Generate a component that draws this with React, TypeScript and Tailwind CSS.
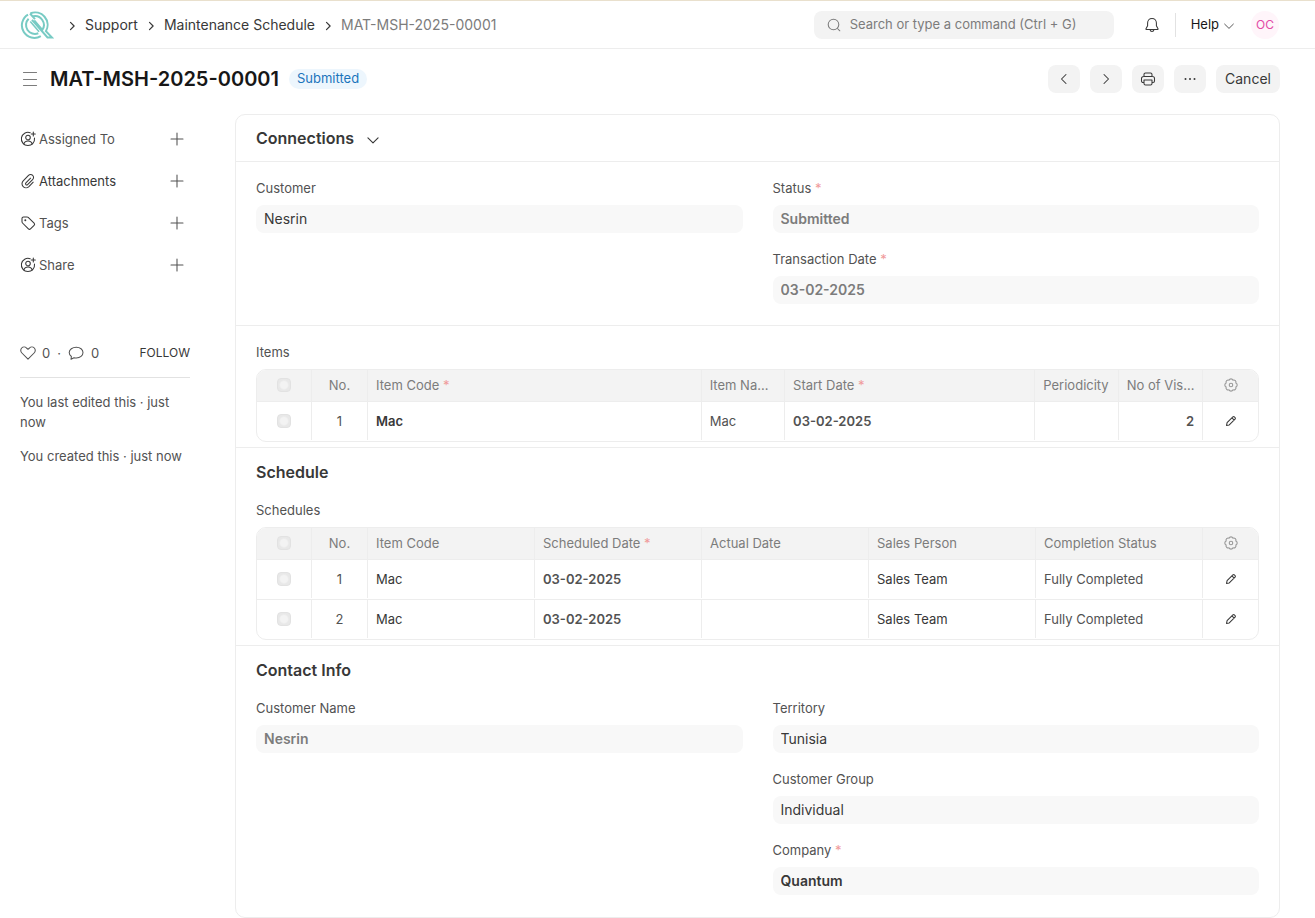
import type { ReactNode } from 'react';

type IconProps = { className?: string; children: ReactNode };

function Icon({ className = 'size-4', children }: IconProps) {
  return (
    <svg
      viewBox="0 0 16 16"
      fill="none"
      stroke="currentColor"
      strokeWidth="1.05"
      strokeLinecap="round"
      strokeLinejoin="round"
      aria-hidden="true"
      className={`shrink-0 ${className}`}
    >
      {children}
    </svg>
  );
}

const chevronRight = <path d="M6 3.5 10.5 8 6 12.5" />;
const crumbChevron = <path d="M6 3.2 10.8 8 6 12.8" strokeWidth="1.6" />;
const chevronLeft = <path d="M10 3.5 5.5 8l4.5 4.5" />;
const chevronDown = <path d="M2.2 5.5 8 11.2l5.8-5.7" strokeWidth="1.3" />;
const plus = <path d="M8 2v12M2 8h12" />;

const assign = (
  <>
    <path d="M10.2 1.7A6.6 6.6 0 1 0 14.5 7" />
    <circle cx="8" cy="6.6" r="2.3" />
    <path d="M3.8 13.1c.4-2 2-3.2 4.2-3.2s3.8 1.2 4.2 3.2M13.3 1v4M11.3 3h4" />
  </>
);

const paperclip = (
  <path d="M10.6 5.2 5.9 9.9a1.2 1.2 0 0 0 1.7 1.7l5-5a2.9 2.9 0 0 0 .1-4.2 2.9 2.9 0 0 0-4.2 0L3.2 7.8a4.1 4.1 0 0 0 0 5.8 4.1 4.1 0 0 0 5.7 0l4.3-4.4" />
);

const tag = (
  <>
    <path d="M2 3.4v3.4c0 .5.2.9.5 1.2l5.9 5.9c.6.6 1.5.6 2.1 0l3.6-3.6c.6-.6.6-1.5 0-2.1L8.2 2.3c-.3-.3-.7-.4-1.1-.4H3.5C2.7 1.9 2 2.6 2 3.4Z" />
    <circle cx="5.3" cy="5.2" r="1" fill="currentColor" stroke="none" />
  </>
);

const pencil = (
  <path
    strokeWidth="1.4"
    d="M2 14l.8-3.7 7.7-7.7c.6-.6 1.4-.6 2 0l.9.9c.6.6.6 1.4 0 2L5.7 13.2 2 14ZM9.3 3.8l2.9 2.9"
  />
);

const gear = (
  <>
    <path
      strokeWidth="1.3"
      d="M13.54 10.3A2.5 2.5 0 0 1 10.3 13.54 2.5 2.5 0 0 1 5.7 13.54 2.5 2.5 0 0 1 2.46 10.3 2.5 2.5 0 0 1 2.46 5.7 2.5 2.5 0 0 1 5.7 2.46 2.5 2.5 0 0 1 10.3 2.46 2.5 2.5 0 0 1 13.54 5.7 2.5 2.5 0 0 1 13.54 10.3Z"
    />
    <circle cx="8" cy="8" r="2" strokeWidth="1.3" />
  </>
);

function Logo() {
  return (
    <svg viewBox="-1 0 34 28" fill="none" stroke="#78cbc4" strokeWidth="2" className="h-7 w-[34px]" aria-hidden="true">
      <path d="M7 3.6A12.5 12.5 0 0 0 19.8 25.1" />
      <path d="M9.5 2.3A12.5 12.5 0 0 1 24.9 20.2L31 26.5H26.5L11 8.8" />
      <path d="M7.6 7.8A8.9 8.9 0 0 0 17.3 22.3" />
      <path d="M9 2.5l5 5.6M12 5.3A8.9 8.9 0 0 1 21.3 19L13.2 9.5" />
      <path d="M9.3 10.5l8.8 10.2" strokeWidth="1.6" />
    </svg>
  );
}

function Navbar() {
  return (
    <header className="flex h-12 items-center border-b border-[#ededed] pr-9 pl-5">
      <a href="#" aria-label="Home">
        <Logo />
      </a>
      <nav aria-label="Breadcrumb" className="ml-3 flex items-center gap-[7px] text-[14px] text-[#383838]">
        <Icon className="size-3 translate-y-px">{crumbChevron}</Icon>
        <a href="#">Support</a>
        <Icon className="size-3 translate-y-px">{crumbChevron}</Icon>
        <a href="#">Maintenance Schedule</a>
        <Icon className="size-3 translate-y-px">{crumbChevron}</Icon>
        <a href="#" className="text-[#7c7c7c]">MAT-MSH-2025-00001</a>
      </nav>
      <label className="ml-auto flex h-7 w-[300px] items-center gap-2 rounded-lg bg-[#f3f3f3] px-3 text-[#7c7c7c]">
        <Icon>
          <circle cx="7.5" cy="7.5" r="5.3" />
          <path d="m11.5 11.5 2.3 2.3" />
        </Icon>
        <input
          type="text"
          aria-label="Search"
          placeholder="Search or type a command (Ctrl + G)"
          className="w-full bg-transparent text-[13px] outline-none placeholder:text-[#7c7c7c]"
        />
      </label>
      <button type="button" aria-label="Notifications" className="ml-[30px] text-[#383838]">
        <Icon>
          <path d="M8 1.5c-2.7 0-4.4 2-4.4 4.6v2.7L2 11.7c-.2.4 0 .8.5.8h11c.5 0 .7-.4.5-.8l-1.6-2.900V6.1C12.4 3.5 10.7 1.5 8 1.5ZM6 12.7c.2 1.1 1 1.8 2 1.8s1.8-.7 2-1.8" />
        </Icon>
      </button>
      <span className="mx-[15px] h-6 w-px bg-[#e2e2e2]" />
      <button type="button" className="flex items-center gap-1 text-[13px] text-[#171717]">
        Help
        <Icon className="size-3 translate-y-px text-[#525252]">{chevronDown}</Icon>
      </button>
      <button type="button" className="ml-4 size-7 rounded-full bg-[#fff5fa] text-[12px] text-[#e34aa6]">
        OC
      </button>
    </header>
  );
}

function ToolButton({ label, children }: { label: string; children: ReactNode }) {
  return (
    <button
      type="button"
      aria-label={label}
      className="flex h-7 w-8 items-center justify-center rounded-lg bg-[#f3f3f3] text-[#383838]"
    >
      <Icon>{children}</Icon>
    </button>
  );
}

function PageHead() {
  return (
    <div className="flex h-[60px] items-center pr-[35px] pl-[22px]">
      <button type="button" aria-label="Toggle sidebar" className="text-[#7c7c7c]">
        <Icon>
          <path d="M1.5 1.5h13M1.5 8.5h13M1.5 14.5h13" strokeWidth="1.2" />
        </Icon>
      </button>
      <h1 className="ml-3 text-[20px] font-semibold text-[#171717]">MAT-MSH-2025-00001</h1>
      <span className="ml-[10px] flex h-5 items-center rounded-full bg-[#edf6fd] px-2 text-[13px] text-[#1b74bc]">
        Submitted
      </span>
      <div className="ml-auto flex gap-[10px]">
        <ToolButton label="Previous">{chevronLeft}</ToolButton>
        <ToolButton label="Next">{chevronRight}</ToolButton>
        <ToolButton label="Print">
          <path d="M4 5.5V3.5C4 2.7 4.6 2 5.5 2h5c.9 0 1.5.7 1.5 1.5v2M4 11.5H3c-.8 0-1.5-.6-1.5-1.5V7.5C1.5 6.4 2.4 5.5 3.5 5.5h9c1.1 0 2 .9 2 2V10c0 .9-.7 1.5-1.5 1.5h-1M4 9h8v3.5c0 .9-.6 1.5-1.5 1.5h-5c-.9 0-1.5-.6-1.5-1.5V9Z" />
        </ToolButton>
        <ToolButton label="Menu">
          <g fill="currentColor" stroke="none">
            <circle cx="3.5" cy="8" r="1" />
            <circle cx="8" cy="8" r="1" />
            <circle cx="12.5" cy="8" r="1" />
          </g>
        </ToolButton>
        <button type="button" className="h-7 min-w-16 rounded-lg bg-[#f3f3f3] px-2 pb-px text-[14px] text-[#383838]">
          Cancel
        </button>
      </div>
    </div>
  );
}

const sidebarItems = [
  { label: 'Assigned To', icon: assign, color: 'text-[#525252]' },
  { label: 'Attachments', icon: paperclip, color: 'text-[#383838]' },
  { label: 'Tags', icon: tag, color: 'text-[#525252]' },
  { label: 'Share', icon: assign, color: 'text-[#525252]' },
];

function Sidebar() {
  return (
    <aside className="w-[170px] shrink-0 pt-1 text-[13px] leading-5 text-[#525252]">
      <ul>
        {sidebarItems.map((item) => (
          <li key={item.label} className="flex h-[42px] items-center">
            <Icon className="mr-[3px] size-4 text-[#383838]">{item.icon}</Icon>
            <span className={item.color}>{item.label}</span>
            <button type="button" aria-label={`Add ${item.label}`} className="mr-[5px] ml-auto">
              <Icon>{plus}</Icon>
            </button>
          </li>
        ))}
      </ul>
      <div className="mt-[57px] flex items-center border-b border-[#e2e2e2] pb-[14px]">
        <button type="button" className="flex items-center gap-[6px]">
          <Icon>
            <path d="M8 14.2 1.9 8C.4 6.5.4 4.3 1.7 3c1.3-1.3 3.5-1.3 4.8 0L8 4.3 9.5 3c1.3-1.3 3.5-1.3 4.8 0 1.3 1.3 1.3 3.5-.2 5L8 14.2Z" />
          </Icon>
          0
        </button>
        <span className="mx-[7px]">·</span>
        <button type="button" className="flex items-center gap-[7px]">
          <Icon>
            <path d="M8.3 2.2c3.8 0 6.7 2.3 6.7 5.4s-2.9 5.4-6.7 5.4c-.8 0-1.6-.1-2.3-.3L3 14.3l.4-2.8C2 10.5 1.2 9.2 1.2 7.6c0-3.1 3.3-5.4 7.1-5.4Z" />
          </Icon>
          0
        </button>
        <button type="button" className="ml-auto text-[12px] text-[#383838]">FOLLOW</button>
      </div>
      <p className="mt-[14px]">You last edited this · just now</p>
      <p className="mt-[14px]">You created this · just now</p>
    </aside>
  );
}

function Required() {
  return <span className="text-[#f09a9a]"> *</span>;
}

type FieldProps = { id: string; label: string; value: string; required?: boolean; tone?: string };

function Field({ id, label, value, required, tone = 'text-[#383838]' }: FieldProps) {
  return (
    <div className="mb-4">
      <label htmlFor={id} className="mb-[6px] block text-[13px] leading-[21px] text-[#525252]">
        {label}
        {required && <Required />}
      </label>
      <input
        id={id}
        type="text"
        readOnly
        defaultValue={value}
        className={`block h-7 w-full rounded-lg bg-[#f8f8f8] px-2 pb-px text-[14px] outline-none ${tone}`}
      />
    </div>
  );
}

type Column = { label: string; head?: string; required?: boolean; cell?: string };

function Grid({ title, columns, rows }: { title: string; columns: Column[]; rows: string[][] }) {
  return (
    <div className="text-[13px] leading-5 text-[#525252]">
      <div className="mb-[7px]">{title}</div>
      <div className="overflow-hidden rounded-[10px] border border-[#ededed]">
        <table aria-label={title} className="w-full table-fixed border-separate border-spacing-0">
          <thead className="bg-[#f3f3f3] text-[#7c7c7c]">
            <tr className="[&>th]:h-8 [&>th]:border-b [&>th]:border-[#ededed] [&>th]:pb-px [&>th]:font-normal [&>th:not(:last-child)]:border-r">
              <th className="w-[55px]">
                <CheckBox label={`Select all ${title}`} />
              </th>
              <th className="w-14">No.</th>
              {columns.map((col) => (
                <th key={col.label} className={`truncate pl-2 text-left ${col.head ?? 'pr-2'}`}>
                  {col.label}
                  {col.required && <Required />}
                </th>
              ))}
              <th className="w-[55px]">
                <button type="button" aria-label="Configure columns" className="block w-full text-[#999999]">
                  <Icon className="mx-auto size-[14px]">{gear}</Icon>
                </button>
              </th>
            </tr>
          </thead>
          <tbody>
            {rows.map((row, i) => (
              <tr key={i} className="[&:not(:last-child)>td]:border-b [&>td]:border-[#ededed] [&>td]:p-0 [&>td]:pb-px">
                <td>
                  <div className="flex h-[38px] items-center justify-center border-r border-[#ededed]">
                    <CheckBox label={`Select row ${i + 1}`} />
                  </div>
                </td>
                <td>
                  <div className="flex h-[38px] items-center justify-center border-r border-[#ededed]">{i + 1}</div>
                </td>
                {row.map((value, c) => (
                  <td key={c}>
                    <div className={`flex h-[38px] items-center border-r border-[#ededed] px-2 ${columns[c].cell ?? ''}`}>
                      {value}
                    </div>
                  </td>
                ))}
                <td>
                  <button type="button" aria-label="Edit row" className="block w-full text-[#383838]">
                    <Icon className="mx-auto size-3">{pencil}</Icon>
                  </button>
                </td>
              </tr>
            ))}
          </tbody>
        </table>
      </div>
    </div>
  );
}

function CheckBox({ label }: { label: string }) {
  return (
    <input
      type="checkbox"
      aria-label={label}
      className="mx-auto block size-[14px] appearance-none rounded-sm border border-[#e2e2e2] bg-[#ededed] bg-radial from-[#f3f3f3] from-40% to-[#e8e8e8] to-60%"
    />
  );
}

const itemColumns: Column[] = [
  { label: 'Item Code', head: 'w-1/3 pr-2', required: true, cell: 'font-semibold text-[#383838]' },
  { label: 'Item Name', head: 'w-1/12 pr-2' },
  { label: 'Start Date', head: 'w-1/4 pr-2', required: true, cell: 'font-semibold' },
  { label: 'Periodicity', head: 'w-1/12 pr-2' },
  { label: 'No of Visits', head: 'pr-[5px]', cell: 'justify-end font-semibold' },
];

const scheduleColumns: Column[] = [
  { label: 'Item Code', cell: 'text-[#383838]' },
  { label: 'Scheduled Date', required: true, cell: 'font-semibold' },
  { label: 'Actual Date' },
  { label: 'Sales Person', cell: 'text-[#383838]' },
  { label: 'Completion Status' },
];

function Section({ title, children }: { title?: string; children: ReactNode }) {
  return (
    <section className="border-t border-[#ededed] px-5 pt-4 pb-[5px]">
      {title && <h2 className="mb-7 h-2 text-[16px] leading-4 font-semibold text-[#383838]">{title}</h2>}
      {children}
    </section>
  );
}

function DocumentForm() {
  return (
    <main className="min-w-0 flex-1 rounded-[10px] border border-[#ededed]">
      <button type="button" className="flex h-[46px] w-full items-center gap-3 px-5 text-[#383838]">
        <span className="text-[16px] font-semibold">Connections</span>
        <Icon className="size-[14px] translate-y-0.5">{chevronDown}</Icon>
      </button>
      <Section>
        <div className="grid grid-cols-2 gap-[30px]">
          <Field id="customer" label="Customer" value="Nesrin" />
          <div>
            <Field id="status" label="Status" value="Submitted" required tone="font-semibold text-[#7c7c7c]" />
            <Field id="date" label="Transaction Date" value="03-02-2025" required tone="font-semibold text-[#7c7c7c]" />
          </div>
        </div>
      </Section>
      <Section>
        <Grid title="Items" columns={itemColumns} rows={[['Mac', 'Mac', '03-02-2025', '', '2']]} />
      </Section>
      <Section title="Schedule">
        <Grid
          title="Schedules"
          columns={scheduleColumns}
          rows={[
            ['Mac', '03-02-2025', '', 'Sales Team', 'Fully Completed'],
            ['Mac', '03-02-2025', '', 'Sales Team', 'Fully Completed'],
          ]}
        />
      </Section>
      <Section title="Contact Info">
        <div className="grid grid-cols-2 gap-[30px]">
          <Field id="customer-name" label="Customer Name" value="Nesrin" tone="font-semibold text-[#7c7c7c]" />
          <div>
            <Field id="territory" label="Territory" value="Tunisia" />
            <Field id="customer-group" label="Customer Group" value="Individual" />
            <Field id="company" label="Company" value="Quantum" required tone="font-semibold text-[#383838]" />
          </div>
        </div>
      </Section>
    </main>
  );
}

export default function App() {
  return (
    <div className="flex min-h-screen flex-col border-t border-[#e9e0cd] bg-white font-['Inter',sans-serif]">
      <Navbar />
      <PageHead />
      <div className="flex flex-1 gap-[45px] pt-[5px] pr-[35px] pl-5">
        <Sidebar />
        <DocumentForm />
      </div>
    </div>
  );
}
